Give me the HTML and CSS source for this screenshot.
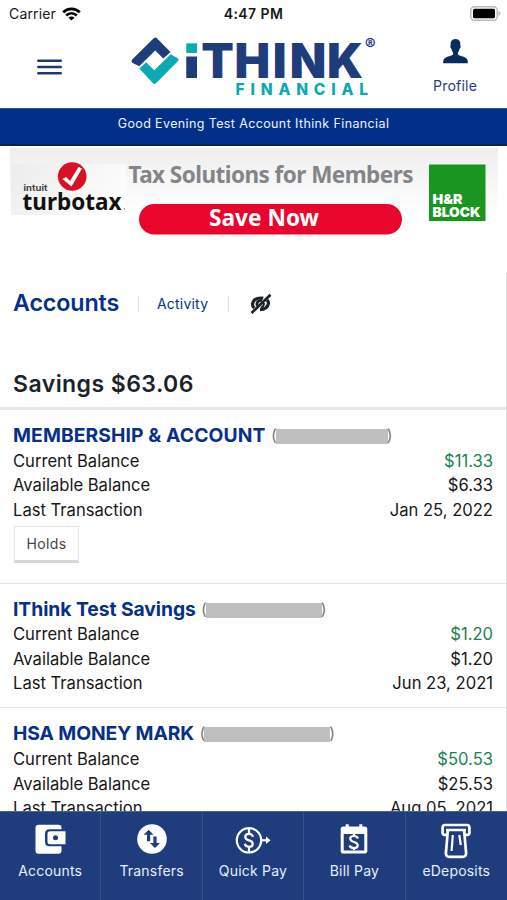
FILE: index.html
```html
<!DOCTYPE html>
<html lang="en">
<head>
<meta charset="utf-8">
<title>Accounts</title>
<link rel="stylesheet" href="styles.css">
</head>
<body>
<div class="app">
  <div class="status">
    <div class="carrier"><span>Carrier</span>
      <svg width="19" height="14" viewBox="0 0 19 14"><g fill="none" stroke="#000" stroke-width="2.700"><path d="M1.200 5.300C5.800.6 13.200.6 17.800 5.300"/><path d="M4.200 8.500c3-3 7.600-3 10.600 0"/></g><path d="M9.500 13.600 6.500 10.700c1.700-1.500 4.300-1.500 6 0z"/></svg>
    </div>
    <div class="clock">4:47 PM</div>
    <svg class="battery" width="31" height="15" viewBox="0 0 31 15"><rect x=".8" y=".8" width="26.400" height="13.400" rx="3.500" fill="#fff" stroke="#b9b9b9" stroke-width="1.400"/><rect x="3" y="2.800" width="22" height="9.400" rx="1.500"/><path d="M28.500 5v5q2-.7 2-2.500T28.500 5z" fill="#b9b9b9"/></svg>
  </div>
  <header class="header">
    <svg class="menu" width="25" height="16" viewBox="0 0 25 16"><path d="M1.300 1.800h22.400M1.300 8h22.400M1.300 14.200h22.400" stroke="#1c3a70" stroke-width="2.500" stroke-linecap="round"/></svg>
    <svg class="logo" width="250" height="64" viewBox="130 36 250 64">
      <path d="M153.700 38.200q1.600-1.500 3.200 0L170.500 52 163.300 58.600 155.200 50.600 139.200 66.200 132.200 62.700q-1.500-1.500 0-3.100z" fill="#1f3d7d"/>
      <path d="M139.300 68.500 146 62.300 154.300 70.200 170.700 54.200 178 58.500q1.200 1.200 0 2.600L156 83.300q-1.500 1.400-3 0z" fill="#09aab2"/>
      <text class="wordmark" y="78" x="184.400 201.200 234.400 272.800 289.800 326.900">iTHINK</text>
      <path d="M185 39h13v18h-13z" fill="#fff"/>
      <path d="M186.300 43.300h10.700v9.700h-10.700z" fill="#09aab2"/><path d="M186.300 56.500h10.700V78h-10.700z" fill="#1f3d7d"/>
      <text class="tagline" x="235.500" y="95" textLength="132.500">FINANCIAL</text>
      <text class="reg" x="364.800" y="50">®</text>
    </svg>
    <div class="profile">
      <svg width="25" height="25" viewBox="0 0 25 25" fill="#092c5c"><path d="M12.500 0c-4 0-5.300 3-4.800 6.500-.9.500-.3 2.700.7 3.200.4 1.800 1 2.900 1.700 3.700v2.200C8 17.600.2 17.600.2 22.500v1.700h24.600v-1.700c0-4.900-7.800-4.900-9.900-6.900v-2.200c.7-.8 1.300-1.900 1.700-3.700 1-.5 1.600-2.700.7-3.200C17.800 3 16.500 0 12.500 0z"/></svg>
      <span>Profile</span>
    </div>
  </header>
  <div class="greeting">Good Evening Test Account Ithink Financial</div>
  <div class="ad">
    <svg width="489" height="88" viewBox="10 148 489 88">
      <defs><linearGradient id="fade" x2="0" y2="1"><stop offset="0" stop-color="#eee"/><stop offset="1" stop-color="#fff"/></linearGradient><linearGradient id="side"><stop offset="0" stop-color="#e8e8e8"/><stop offset="1" stop-color="#fff"/></linearGradient></defs>
      <rect x="10" y="148" width="488" height="66" fill="url(#fade)"/>
      <rect x="11" y="164" width="115" height="51" fill="url(#side)" opacity=".6"/>
      <circle cx="72.200" cy="176.500" r="14.300" fill="#d51324"/>
      <path d="m62.500 179 3.500-2 4 4 8.500-14 3.500 1.500-10.500 18z" fill="#fff"/>
      <text class="intuit" x="23.500" y="191" textLength="24" lengthAdjust="spacingAndGlyphs">intuit</text>
      <text class="turbotax" x="22.500" y="210" textLength="99" lengthAdjust="spacingAndGlyphs">turbotax</text><circle cx="124.500" cy="209" r=".7" fill="#777"/>
      <text class="ad-title" x="128.500" y="183" textLength="285">Tax Solutions for Members</text>
      <rect x="139" y="204" width="263" height="30.500" rx="15.200" fill="#e9052b"/>
      <text class="ad-button" x="209" y="225.500" textLength="110" lengthAdjust="spacingAndGlyphs">Save Now</text>
      <rect x="429" y="164.500" width="56.500" height="56.500" fill="#18961f"/>
      <text class="block" x="432.500" y="204" textLength="30" lengthAdjust="spacingAndGlyphs">H&amp;R</text>
      <text class="block" x="432.500" y="217" textLength="48" lengthAdjust="spacingAndGlyphs">BLOCK</text>
    </svg>
  </div>
  <main class="content">
    <nav class="tabs">
      <h1>Accounts</h1><i></i><a>Activity</a><i></i>
      <svg width="22" height="20" viewBox="0 0 22 20" fill="none" stroke="#1b232a"><path d="M17 5.800q1.500 1.500 1.500 3.600c-.8 3.800-4 6.200-8.500 6.200M4.200 14Q2.300 12.300 2.500 9.800C3.300 6.200 6.500 4 11 4q1.200 0 2.200.3" stroke-width="3.200"/><path d="M7.300 12C6 8.500 8.500 6 12 6.500" stroke-width="2.800"/><path d="M14 9q.3 3-3 5" stroke-width="1.800"/><path d="M1.500 19 20.500.8" stroke-width="2.600"/></svg>
    </nav>
    <h2>Savings $63.06</h2>
    <section class="account">
      <h3><b class="n1">MEMBERSHIP &amp; ACCOUNT</b><span class="mask m1">(<i></i>)</span></h3>
      <dl><dt>Current Balance</dt><dd class="good">$11.33</dd><dt>Available Balance</dt><dd>$6.33</dd><dt>Last Transaction</dt><dd>Jan 25, 2022</dd></dl>
      <button>Holds</button>
    </section>
    <section class="account">
      <h3><b class="n2">IThink Test Savings</b><span class="mask m2">(<i></i>)</span></h3>
      <dl><dt>Current Balance</dt><dd class="good">$1.20</dd><dt>Available Balance</dt><dd>$1.20</dd><dt>Last Transaction</dt><dd>Jun 23, 2021</dd></dl>
    </section>
    <section class="account">
      <h3><b class="n3">HSA MONEY MARK</b><span class="mask m3">(<i></i>)</span></h3>
      <dl><dt>Current Balance</dt><dd class="good">$50.53</dd><dt>Available Balance</dt><dd>$25.53</dd><dt>Last Transaction</dt><dd>Aug 05, 2021</dd></dl>
    </section>
  </main>
  <nav class="bottom">
    <a><svg width="36" height="36" viewBox="0 0 36 36"><path fill="#fff" d="M6 2.500h20q3 0 3 3V7H17q-4.500 0-4.500 4.500v8q0 4.500 4.500 4.500h12v4.500q0 3-3 3H6q-3 0-3-3v-23q0-3 3-3z" transform="translate(.5 .3)"/><path fill="#fff" d="M18 9.300h15.500v13H18q-2.500 0-2.500-2.500v-8q0-2.500 2.500-2.500z"/><circle cx="23.500" cy="15.800" r="2.500" fill="#1f3d7d"/></svg><span>Accounts</span></a>
    <a><svg width="36" height="36" viewBox="0 0 36 36"><circle cx="18" cy="17" r="14.800" fill="#fff"/><path fill="#1f3d7d" d="m14.600 7.800 5 5h-3.400v6.500H13v-6.500H9.600zM21 26l-5-5h3.400v-6.500h3.200V21H26z"/></svg><span>Transfers</span></a>
    <a><svg width="36" height="36" viewBox="0 0 36 36" fill="none" stroke="#fff"><g stroke-width="2.200"><circle cx="14" cy="18.300" r="12.200"/><path d="M26 18.300h6"/><path d="M18 14.800q-.8-3-4-3c-5 0-5 5.500 0 6.500s5 6.500 0 6.500q-3.500 0-4.200-3M14 6.500v5.300M14 24.800v5.300"/></g><path d="m31 14.500 4.500 3.800-4.500 3.800z" fill="#fff" stroke="none"/></svg><span>Quick Pay</span></a>
    <a><svg width="36" height="36" viewBox="0 0 36 36"><path fill="#fff" fill-rule="evenodd" d="M7.500 4.500h2.200V2.300h3v2.200h10.600V2.300h3v2.200h2.200q2.800 0 2.800 2.800v21.400q0 2.800-2.800 2.800h-21q-2.800 0-2.800-2.800V7.300q0-2.800 2.800-2.800zM7.700 12v16.600h20.600V12z"/><path d="M22 16.500q-1-2.500-4-2.500c-5 0-5 4.800 0 6s5 6 0 6q-3.500 0-4.500-2.500M18 12v2M18 26v2" fill="none" stroke="#fff" stroke-width="2.200"/></svg><span>Bill Pay</span></a>
    <a><svg width="36" height="36" viewBox="0 0 36 36" fill="none" stroke="#fff" stroke-width="2.700"><path d="M8.500 12.800H6.500Q4.600 12.800 4.600 10.800V5.500q0-2.500 2.500-2.500h21.800q2.500 0 2.500 2.500v5.300q0 2-2 2H27.500"/><path d="M8 8h20M9.800 9 7.900 30.800q-.2 4 3.500 4h13.200q3.700 0 3.500-4L26.200 9"/><path d="m14.800 13-1.200 16M21.300 13l1.500 10" stroke-width="2.200"/></svg><span>eDeposits</span></a>
  </nav>
</div>
</body>
</html>
```
FILE: styles.css
```css
* { box-sizing: border-box; }
body { margin: 0; background: #fff; color: #171717; font-family: Inter, "Liberation Sans", sans-serif; }
h1, h2, h3, dl, dd { margin: 0; }
svg { display: block; flex: none; overflow: visible; }
.app { height: 900px; display: flex; flex-direction: column; overflow: hidden; }
.status { height: 27px; flex: none; display: grid; grid-template-columns: 1fr auto 1fr; align-items: center; padding: 0 6px 0 9px; font-size: 14px; }
.carrier { display: flex; gap: 6px; align-items: center; letter-spacing: .15px; }
.clock { font-weight: 600; letter-spacing: .4px; margin-left: -3px; }
.battery { justify-self: end; margin-top: -1px; }
.header { height: 81px; flex: none; display: flex; align-items: flex-start; }
.menu { margin: 32px 0 0 37px; }
.logo { margin: 9px 0 0 68px; }
.wordmark { font: 900 47.500px Inter, sans-serif; fill: #1f3d7d; }
.tagline { font: 800 15.500px Inter, sans-serif; fill: #09aab2; }
.reg { font: 700 16.500px Inter, sans-serif; fill: #1f3d7d; }
.profile { width: 60px; margin: 12px 0 0 45px; display: flex; flex-direction: column; align-items: center; color: #1f3d8d; font-size: 14.200px; line-height: 20px; gap: 12px; letter-spacing: .15px; }
.greeting { height: 38px; flex: none; background: #023088; border-top: 1px solid #345799; border-bottom: 2px solid #0a2352; color: #eef3ff; text-align: center; font-size: 12.500px; line-height: 30px; letter-spacing: .38px; }
.ad { height: 127px; flex: none; padding: 2px 0 0 10px; }
.intuit { font: 700 9px Inter, sans-serif; fill: #444; }
.turbotax { font: 700 24px "Noto Sans", sans-serif; fill: #111; }
.ad-title { font: 700 22.500px "Noto Sans", sans-serif; fill: #838588; }
.ad-button { font: 700 22.500px "Noto Sans", sans-serif; fill: #fff; }
.block { font: 900 13.500px Inter, sans-serif; fill: #fff; }
.content { flex: 1; min-height: 0; overflow: hidden; border-right: 1px solid #ddd; }
.tabs { height: 62px; display: flex; align-items: center; padding-left: 13px; color: #073087; }
.tabs h1 { font-size: 23.300px; line-height: 28px; font-weight: 600; width: 125px; letter-spacing: -.15px; padding-bottom: 2px; }
.tabs > i { width: 1px; height: 16px; background: #ddd; }
.tabs a { font-size: 14px; width: 89px; padding: 0 0 2px 18px; letter-spacing: .2px; }
.tabs svg { margin-left: 21px; }
h2 { height: 75px; padding: 36px 0 0 13px; border-bottom: 3px solid #e7e7e7; color: #1b232a; font-size: 23px; line-height: 27px; font-weight: 600; letter-spacing: .45px; }
.account { padding: 12px 13px 11.500px 13px; border-bottom: 1.500px solid #e5e5e5; }
.account h3 { display: flex; align-items: center; height: 26px; color: #073087; font-size: 19.300px; letter-spacing: 0; }
.account b { font-weight: 650; white-space: nowrap; }
.n1 { width: 252px; letter-spacing: .1px; } .n2 { width: 182px; letter-spacing: -.05px; } .n3 { width: 180.500px; letter-spacing: -.1px; }
.mask { display: flex; align-items: center; color: #777; font-size: 16px; font-weight: 400; margin-left: 6px; }
.mask i { height: 15px; background: #bfbfbf; margin: 3px -1px 0; }
.m1 i { width: 112px; } .m2 i { width: 116px; } .m3 i { width: 126px; }
.account dl { display: grid; grid-template-columns: auto auto; justify-content: space-between; font-size: 16.600px; line-height: 24.500px; padding-top: .7px; letter-spacing: 0; }
.account dd { text-align: right; }
.account .good { color: #178350; }
button { display: block; width: 65px; height: 37px; margin: 4px 0 8px 1px; padding: 0; border: 1.500px solid #e5e5e5; border-bottom: 3px solid #d7d7d7; background: #fff; color: #454545; font: 14px Inter, sans-serif; letter-spacing: .4px; }
.bottom { height: 89px; flex: none; display: grid; grid-template-columns: repeat(5, 1fr); background: #1f3d7d; border-top: 1px solid #496497; color: #e5efff; font-size: 14px; letter-spacing: .2px; }
.bottom a { padding-top: 10px; display: flex; flex-direction: column; align-items: center; gap: 3px; line-height: 20px; border-right: 1px solid #345085; }
.bottom a:last-child { border: 0; }
```
